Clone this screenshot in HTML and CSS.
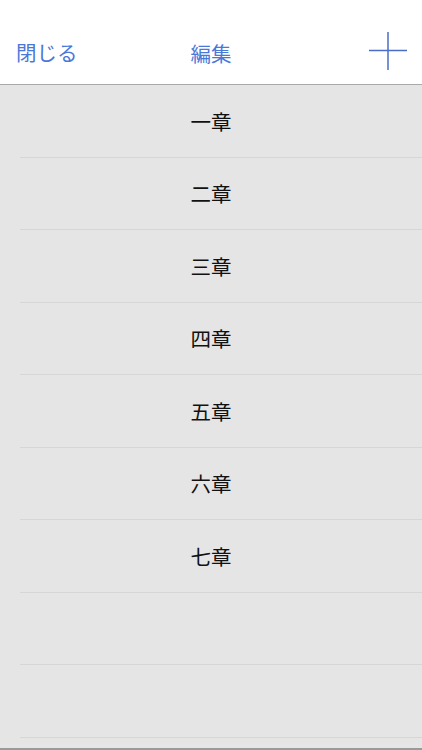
FILE: index.html
```html
<!DOCTYPE html>
<html lang="ja">
<head>
    <meta charset="UTF-8">
    <meta name="viewport" content="width=device-width, initial-scale=1.0">
    <title>編集</title>
    <link rel="stylesheet" href="styles.css">
</head>
<body>

    <div class="header">
        <span class="close">閉じる</span>
        <span class="title">編集</span>
        <span class="add">
            <svg width="40" height="40" viewBox="0 0 40 40">
                <path d="M20 1V39M1 19.5H39" stroke="#4a6dc6" stroke-width="1.5" fill="none"/>
            </svg>
        </span>
    </div>

    <ul class="list">
        <li>一章</li>
        <li>二章</li>
        <li>三章</li>
        <li>四章</li>
        <li>五章</li>
        <li>六章</li>
        <li>七章</li>
        <li></li>
        <li></li>
    </ul>

    <div class="footer"></div>

</body>
</html>
```

FILE: styles.css
```css
* {
    margin: 0; padding: 0;
    box-sizing: border-box;
}
body {
    font-family: "Noto Sans CJK JP", "Liberation Sans", sans-serif;
    background: #e5e5e5;
    height: 750px;
    overflow: hidden;
    display: flex;
    flex-direction: column;
}
.header {
    height: 85px;
    background: white;
    border-bottom: 1px solid #a9a9a9;
    display: flex;
    align-items: center;
    justify-content: space-between;
    padding: 20px 14px 0 16px;
    position: relative;
}
.close, .title {
    color: #4a78d8;
    font-size: 20.5px;
    line-height: 1;
}
.title {
    position: absolute;
    left: 0; right: 0;
    text-align: center;
    top: 43px;
}
.close {
    margin-top: 1px;
}
.add {
    display: flex;
    margin-top: -2px;
}
.list {
    list-style: none;
    flex: 1;
}
.list li {
    height: 72.5px;
    border-bottom: 1px solid #d6d6d6;
    margin-left: 20px;
    padding-right: 20px;
    display: flex;
    align-items: center;
    justify-content: center;
    font-size: 20.5px;
    color: #111;
}
.footer {
    height: 2px;
    background: #9a9a9a;
}
```
